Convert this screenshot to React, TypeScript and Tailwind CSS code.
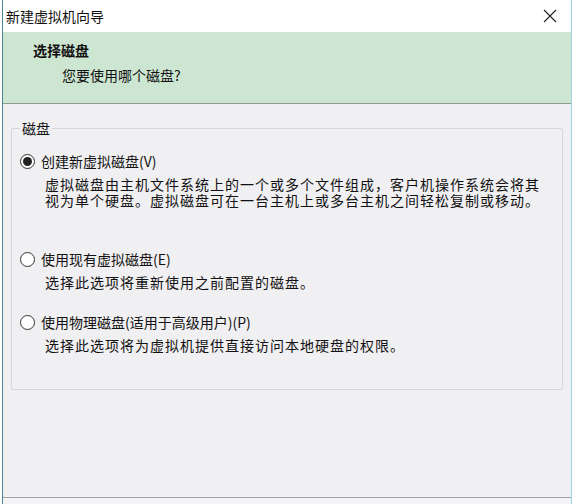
import React from "react";

const font = { fontFamily: '"Noto Sans CJK SC", "Liberation Sans", sans-serif' };

const Radio: React.FC<{ checked?: boolean }> = ({ checked }) => (
  <span className="flex h-[15px] w-[15px] shrink-0 items-center justify-center rounded-full border border-[#333] bg-white">
    {checked && <span className="h-[9px] w-[9px] rounded-full bg-[#222]" />}
  </span>
);

const Option: React.FC<{ label: string; desc: string[]; checked?: boolean; className?: string }> = ({
  label,
  desc,
  checked,
  className,
}) => (
  <div className={className}>
    <div className="flex h-[18px] items-center gap-[6px]">
      <Radio checked={checked} />
      <span className="text-[14px] leading-[18px] text-[#111]">{label}</span>
    </div>
    <div className="pl-[25px] pt-[6px] text-[14px] leading-[16px] tracking-[1px] text-[#111]">
      {desc.map((d) => (
        <div key={d} className="h-[16px] whitespace-nowrap">
          {d}
        </div>
      ))}
    </div>
  </div>
);

export default function App() {
  return (
    <div className="h-[504px] w-[574px] bg-white" style={font}>
      <div className="ml-[2px] flex h-full w-[570px] flex-col border-l border-r border-l-[#4f8591] border-r-[#9fd2ea]">
        <div className="flex h-[32px] items-center justify-between bg-white pl-[3px] pr-[12px]">
          <span className="text-[14px] text-[#111]">新建虚拟机向导</span>
          <svg width="14" height="14" viewBox="0 0 14 14" className="mr-[2px]">
            <path d="M1 1 L13 13 M13 1 L1 13" stroke="#222" strokeWidth="1.1" />
          </svg>
        </div>
        <div className="h-[72px] border-b border-[#8f9a92] bg-[#cde6d1] pl-[30px] pt-[9px]">
          <div className="text-[14px] font-bold leading-[18px] text-[#111]">选择磁盘</div>
          <div className="pl-[29px] pt-[7px] text-[14px] leading-[18px] text-[#111]">您要使用哪个磁盘?</div>
        </div>
        <div className="flex flex-1 flex-col bg-[#f0eff2] px-[8px] pt-[16px]">
          <fieldset className="h-[270px] rounded-[2px] border border-[#d7d7d9] pl-[8px] pr-[10px]">
            <legend className="px-[2px] text-[14px] leading-[16px] text-[#111]">磁盘</legend>
            <Option
              className="mt-[16px]"
              checked
              label="创建新虚拟磁盘(V)"
              desc={[
                "虚拟磁盘由主机文件系统上的一个或多个文件组成，客户机操作系统会将其",
                "视为单个硬盘。虚拟磁盘可在一台主机上或多台主机之间轻松复制或移动。",
              ]}
            />
            <Option
              className="mt-[42px]"
              label="使用现有虚拟磁盘(E)"
              desc={["选择此选项将重新使用之前配置的磁盘。"]}
            />
            <Option
              className="mt-[23px]"
              label="使用物理磁盘(适用于高级用户)(P)"
              desc={["选择此选项将为虚拟机提供直接访问本地硬盘的权限。"]}
            />
          </fieldset>
          <div className="flex-1" />
          <div className="-mx-[8px] h-[7px] border-t border-[#a3a3a6] bg-[#f4f4f6]" />
        </div>
      </div>
    </div>
  );
}
